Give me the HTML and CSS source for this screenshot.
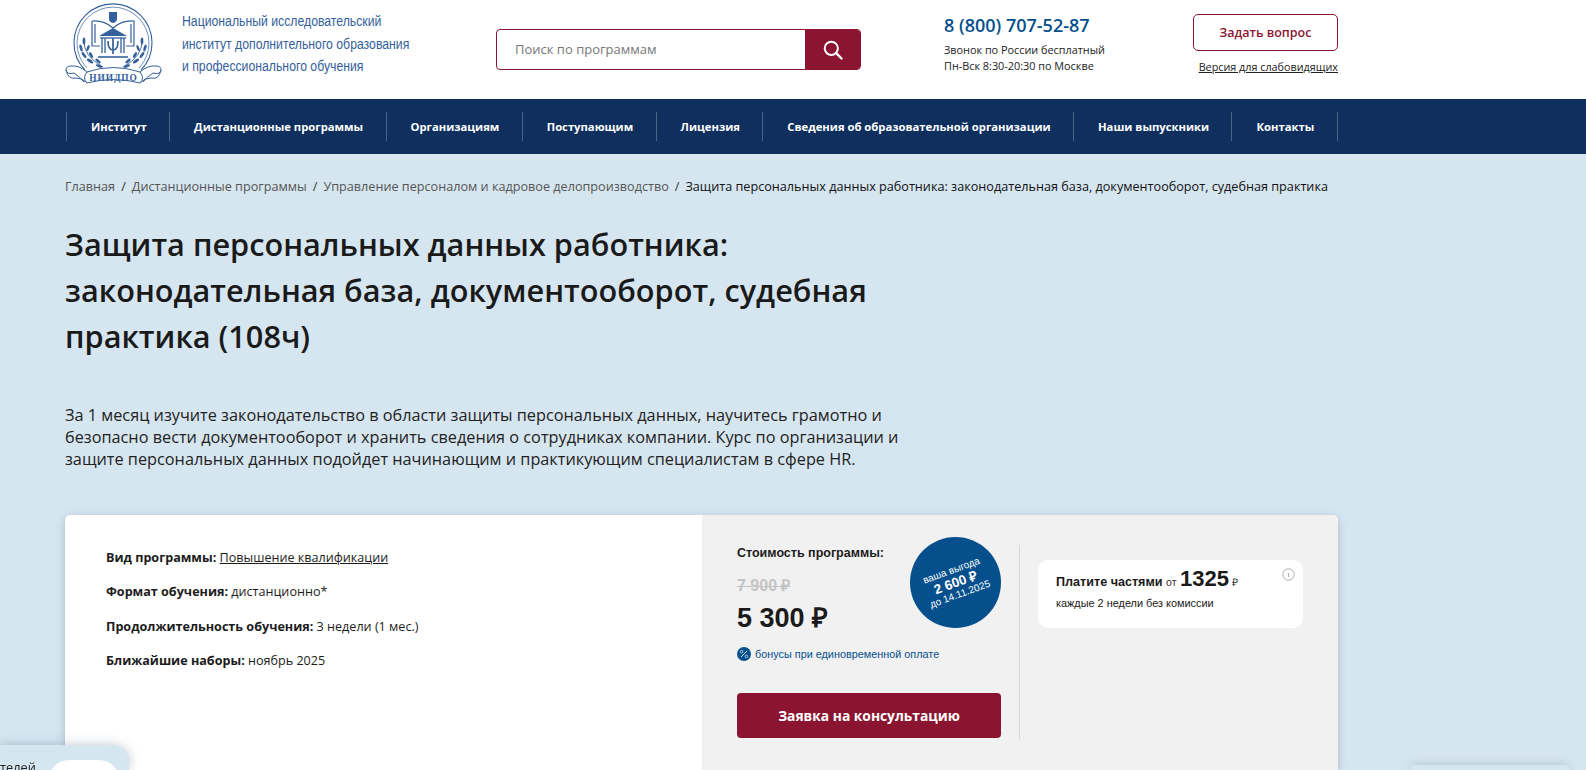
FILE: index.html
```html
<!DOCTYPE html>
<html lang="ru">
<head>
<meta charset="utf-8">
<title>Защита персональных данных работника</title>
<link rel="stylesheet" href="styles.css">
</head>
<body>
<header class="header">
  <div class="wrap header-row">
    <a class="logo">
      <svg class="logo-mark" viewBox="10 0 100 90" fill="none" stroke="#34619c">
        <path d="M30 70A39 39 0 1 1 86 70" stroke-width="1.1"/>
        <path d="M32 68A36 36 0 1 1 84 68" stroke-width=".7"/>
        <path d="M54 12h8v7q0 3-4 4-4-1-4-4z" fill="#34619c" stroke="none"/>
        <path d="M37 21v25h8M37 21q12-1 21 7 9-8 21-7v25h-8M40 24v19M76 24v19" stroke-width="1.2"/>
        <path d="M44 36l14-8 14 8z" fill="#34619c" stroke="none"/>
        <path d="M45 38h26" stroke-width="1.3"/>
        <path d="M47 38v15M69 38v15M50 38v15M66 38v15" stroke-width="1.3"/>
        <path d="M53 41q0 9 5 9t5-9M58 38v16" stroke-width="1.7"/>
        <path d="M43 57h30" stroke-width="1.6"/>
        <g id="laurel">
          <path d="M29 40q-1 16 19 27" stroke-width=".9"/>
          <g fill="#34619c" stroke="none">
            <ellipse cx="29" cy="41" rx="1.4" ry="3.6"/>
            <ellipse cx="26" cy="48" rx="1.4" ry="3.6" transform="rotate(-15 26 48)"/>
            <ellipse cx="33" cy="48" rx="1.3" ry="3.2" transform="rotate(20 33 48)"/>
            <ellipse cx="29" cy="55" rx="1.4" ry="3.6" transform="rotate(-35 29 55)"/>
            <ellipse cx="36" cy="55" rx="1.3" ry="3.2" transform="rotate(-30 36 55)"/>
            <ellipse cx="35" cy="61" rx="1.4" ry="3.6" transform="rotate(-55 35 61)"/>
            <ellipse cx="43" cy="61" rx="1.3" ry="3.2" transform="rotate(-50 43 61)"/>
            <ellipse cx="44" cy="66" rx="1.3" ry="3.4" transform="rotate(-70 44 66)"/>
          </g>
        </g>
        <use href="#laurel" transform="matrix(-1 0 0 1 116 0)"/>
        <path d="M32 72q26-9 53 0q5 6 0 11q-27-7-53 0q-5-5 0-11z" fill="#fff" stroke-width="1"/>
        <path d="M32 72q-8-7-16-6q-5 0-5 4 1 5 8 3 6 4 10 9M85 72q8-7 16-6q5 0 5 4-1 5-8 3-6 4-10 9M11 70q2 10 10 8 6 0 10 4M106 70q-2 10-10 8-6 0-10 4" stroke-width="1"/>
        <text class="logo-abbr" x="58.5" y="80.5" text-anchor="middle">НИИДПО</text>
      </svg>
      <span class="logo-text">Национальный исследовательский<br>институт дополнительного образования<br>и профессионального обучения</span>
    </a>
    <form class="search">
      <span class="search-input">Поиск по программам</span>
      <span class="search-btn">
        <svg width="20" height="20" viewBox="0 0 20 20" fill="none" stroke="#fff" stroke-width="2"><circle cx="8.3" cy="8.3" r="6.6"/><path d="M13.2 13.2l5.3 5.3" stroke-linecap="round" stroke-width="2.4"/></svg>
      </span>
    </form>
    <div class="phone">
      <div class="phone-num">8 (800) 707-52-87</div>
      <div class="phone-note">Звонок по России бесплатный<br>Пн-Вск 8:30-20:30 по Москве</div>
    </div>
    <div class="actions">
      <a class="ask">Задать вопрос</a>
      <a class="access">Версия для слабовидящих</a>
    </div>
  </div>
</header>

<nav class="nav">
  <div class="wrap nav-row">
    <a class="nav-item">Институт</a>
    <a class="nav-item">Дистанционные программы</a>
    <a class="nav-item">Организациям</a>
    <a class="nav-item">Поступающим</a>
    <a class="nav-item">Лицензия</a>
    <a class="nav-item">Сведения об образовательной организации</a>
    <a class="nav-item">Наши выпускники</a>
    <a class="nav-item nav-last">Контакты</a>
  </div>
</nav>

<main class="wrap main">
  <div class="crumbs">
    <a>Главная</a><i>/</i><a>Дистанционные программы</a><i>/</i><a>Управление персоналом и кадровое делопроизводство</a><i>/</i><span>Защита персональных данных работника: законодательная база, документооборот, судебная практика</span>
  </div>
  <h1 class="title">Защита персональных данных работника: законодательная база, документооборот, судебная практика (108ч)</h1>
  <p class="lead">За 1 месяц изучите законодательство в области защиты персональных данных, научитесь грамотно и безопасно вести документооборот и хранить сведения о сотрудниках компании. Курс по организации и защите персональных данных подойдет начинающим и практикующим специалистам в сфере HR.</p>

  <section class="card">
    <div class="facts">
      <p><b>Вид программы:</b> <a class="link">Повышение квалификации</a></p>
      <p><b>Формат обучения:</b> дистанционно*</p>
      <p><b>Продолжительность обучения:</b> 3 недели (1 мес.)</p>
      <p><b>Ближайшие наборы:</b> ноябрь 2025</p>
    </div>
    <div class="buy">
      <div class="price-col">
        <div class="price-label">Стоимость программы:</div>
        <div class="price-old">7 900 ₽</div>
        <div class="price-new">5 300 ₽</div>
        <div class="bonus">
          <svg class="bonus-icon" viewBox="0 0 14 14"><circle cx="7" cy="7" r="7" fill="#05508c"/><path d="M4 10l6-6" stroke="#cfe0ee" stroke-width="1"/><circle cx="4.6" cy="4.6" r="1.3" fill="none" stroke="#cfe0ee" stroke-width=".8"/><circle cx="9.4" cy="9.4" r="1.3" fill="none" stroke="#cfe0ee" stroke-width=".8"/></svg>
          бонусы при единовременной оплате
        </div>
        <a class="cta">Заявка на консультацию</a>
        <div class="badge">
          <div class="badge-text">
            <span class="badge-sm">ваша выгода</span>
            <span class="badge-lg">2 600 ₽</span>
            <span class="badge-sm">до 14.11.2025</span>
          </div>
        </div>
      </div>
      <div class="parts-col">
        <div class="parts">
          <div class="parts-top"><b>Платите частями</b> <span class="parts-small">от</span> <b class="parts-num">1325</b> <span class="parts-small">₽</span></div>
          <div class="parts-sub">каждые 2 недели без комиссии</div>
          <svg class="info" viewBox="0 0 13 13" fill="none"><circle cx="6.5" cy="6.5" r="5.7" stroke="#aaa"/><path d="M6.5 5v4" stroke="#aaa"/></svg>
        </div>
      </div>
    </div>
  </section>
</main>

<aside class="float-left"><span class="float-text">телей</span><span class="float-pill"></span></aside>
<aside class="float-right"></aside>
</body>
</html>
```
FILE: styles.css
```css
* { box-sizing: border-box; }
html, body { margin: 0; height: 770px; overflow: hidden; }
body { background: #d6e6f1; font-family: "Open Sans", sans-serif; color: #1c1c1c; }
p, h1 { margin: 0; }
.wrap { width: 1273px; margin-left: 65px; }

.header { background: #fff; height: 99px; }
.header-row { display: flex; align-items: flex-start; height: 99px; }
.logo { display: flex; width: 431px; }
.logo-mark { width: 100px; height: 90px; flex: none; }
.logo-abbr { font: bold 9.4px "Liberation Serif", serif; letter-spacing: .9px; fill: #34619c; stroke: none; }
.logo-text { flex: none; margin: 10px 0 0 17px; font: 15.5px/22.5px "Liberation Sans", sans-serif; color: #34619c; white-space: nowrap; transform: scaleX(.79); transform-origin: 0 0; }

.search { display: flex; width: 365px; height: 41px; margin-top: 29px; border: 1px solid #8b1530; border-radius: 4px; overflow: hidden; }
.search-input { flex: 1; padding-left: 18px; font-size: 13px; line-height: 39px; color: #777; }
.search-btn { width: 56px; background: #8b1530; display: flex; align-items: center; justify-content: center; margin: -1px; }

.phone { width: 249px; margin: 13px 0 0 83px; }
.phone-num { font-size: 18px; font-weight: 600; line-height: 24px; color: #05508c; }
.phone-note { margin-top: 5px; font-size: 10.85px; line-height: 16px; color: #222; }

.actions { width: 145px; margin-top: 14px; text-align: right; }
.ask { display: block; height: 37px; border: 1px solid #8b1530; border-radius: 5px; text-align: center; font-size: 12.5px; font-weight: 600; line-height: 35px; color: #8b1530; }
.access { display: inline-block; margin-top: 8px; font-size: 10.8px; line-height: 15px; color: #222; text-decoration: underline; white-space: nowrap; }

.nav { background: #0f2f5f; height: 55px; }
.nav-row { display: flex; align-items: center; height: 55px; padding-left: 1px; }
.nav-item { height: 29px; padding: 0 22.4px 0 24px; border-left: 1px solid #4a6488; font-size: 11.25px; font-weight: 700; line-height: 29px; color: #fff; white-space: nowrap; }
.nav-last { border-right: 1px solid #4a6488; }

.crumbs { padding-top: 24px; font-size: 12.65px; line-height: 17px; color: #111; white-space: nowrap; }
.crumbs a { color: #555; }
.crumbs i { font-style: normal; margin: 0 6px; color: #333; }

.title { width: 880px; margin-top: 26px; font-size: 30.7px; font-weight: 600; line-height: 46px; color: #1a1a1a; }
.lead { width: 840px; margin-top: 45px; font-size: 16.27px; line-height: 22px; color: #222; }

.card { display: flex; height: 255px; margin-top: 45px; background: #fff; border-radius: 5px 5px 0 0; box-shadow: 0 2px 8px rgba(40, 60, 90, .25); overflow: hidden; }
.facts { width: 637px; padding: 34px 0 0 41px; font-size: 12.6px; line-height: 18px; }
.facts p { margin-bottom: 16.4px; }
.facts b { font-weight: 700; }
.link { text-decoration: underline; }

.buy { flex: 1; display: flex; background: #f1f1f1; padding: 30px 0 0 35px; align-items: flex-start; }
.price-col { position: relative; width: 283px; height: 194px; padding-top: 1px; border-right: 1px solid #d8d8d8; font-family: "Liberation Sans", Arial, sans-serif; }
.price-label { font-size: 12.5px; font-weight: 700; line-height: 15px; }
.price-old { margin-top: 16px; font-size: 16px; font-weight: 700; line-height: 18px; color: #c4c4c4; text-decoration: line-through; }
.price-new { margin-top: 7px; font-size: 27px; font-weight: 700; line-height: 33px; color: #1a1a1a; }
.bonus { display: flex; align-items: center; gap: 4px; margin-top: 12px; font-size: 10.85px; line-height: 14px; color: #05508c; white-space: nowrap; }
.bonus-icon { width: 14px; height: 14px; flex: none; }
.cta { display: block; width: 264px; height: 45px; margin-top: 32px; background: #8b1530; border-radius: 4px; font: 700 13.8px/45px "Open Sans", sans-serif; text-align: center; color: #fff; }
.badge { position: absolute; left: 173px; top: -8px; width: 91px; height: 91px; border-radius: 50%; background: #05508c; display: flex; align-items: center; justify-content: center; }
.badge-text { transform: rotate(-20deg); text-align: center; color: #fff; }
.badge-sm { display: block; font-size: 10px; line-height: 12px; }
.badge-lg { display: block; font-size: 13.5px; font-weight: 700; line-height: 13px; }

.parts-col { padding: 15px 0 0 18px; font-family: "Liberation Sans", Arial, sans-serif; }
.parts { position: relative; width: 265px; height: 68px; padding: 5px 0 0 18px; background: #fff; border-radius: 10px; color: #1a1a1a; }
.parts-top { font-size: 12.6px; line-height: 28px; white-space: nowrap; }
.parts-small { font-size: 10.5px; color: #333; }
.parts-num { font-size: 22px; }
.parts-sub { font-size: 10.9px; line-height: 14px; }
.info { position: absolute; right: 8px; top: 8px; width: 13px; height: 13px; }

.float-left { position: fixed; left: 0; top: 745px; width: 129px; height: 25px; overflow: hidden; background: #d6e6f1; border-radius: 0 16px 0 0; box-shadow: 0 0 12px rgba(40, 60, 90, .28); }
.float-text { position: absolute; left: 0; top: 14px; font-size: 12.8px; line-height: 16px; color: #222; }
.float-pill { position: absolute; left: 49px; top: 15px; width: 70px; height: 40px; background: #fff; border-radius: 20px; }
.float-right { position: fixed; left: 1410px; top: 765px; width: 160px; height: 5px; background: #d6e6f1; border-radius: 14px 14px 0 0; box-shadow: 0 0 10px rgba(40, 60, 90, .28); }
```
